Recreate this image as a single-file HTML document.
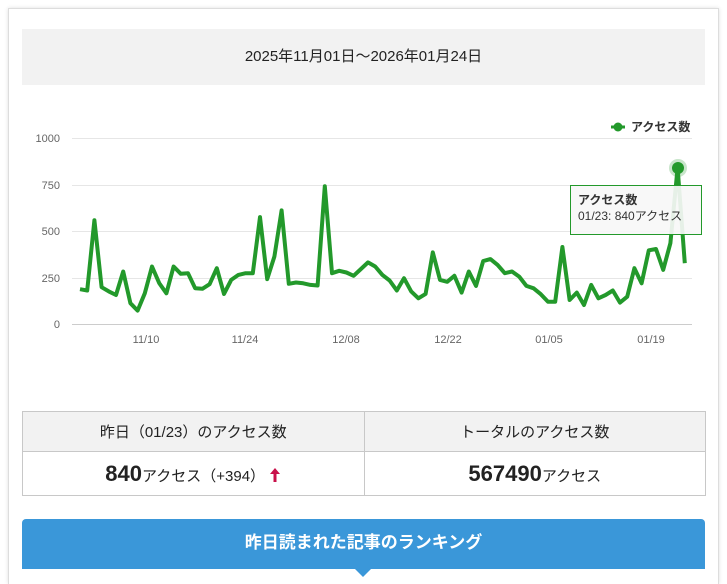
<!DOCTYPE html>
<html><head><meta charset="utf-8"><style>
html,body{margin:0;background:#fff;width:727px;height:577px;overflow:hidden;font-family:"Liberation Sans","Noto Sans CJK JP",sans-serif;color:#222}
.card{position:absolute;left:8px;top:8px;width:709px;height:575px;border:1px solid #ddd;border-bottom:none;box-shadow:0 0 4px rgba(0,0,0,.12);background:#fff}
.date{position:absolute;left:22px;top:29px;width:683px;height:56px;background:#f2f2f2;text-align:center;line-height:56px;font-size:15px}
table{position:absolute;left:22px;top:411px;width:684px;border-collapse:collapse;font-size:15px}
td{border:1px solid #c8c8c8;text-align:center;width:50%;padding:0}
tr.h td{background:#f2f2f2;height:39px}
tr.v td{height:43px;font-size:15px}
b{font-size:22px}
.btn{position:absolute;left:22px;top:519px;width:683px;height:50px;background:#3a97d9;border-radius:4px 4px 0 0;color:#fff;font-weight:bold;font-size:17px;text-align:center;line-height:48px}
.tri{position:absolute;left:355px;top:569px;border-left:8px solid transparent;border-right:8px solid transparent;border-top:8px solid #3a97d9}
svg{position:absolute;left:0;top:0}
</style></head><body>
<div class="card"></div>
<div class="date">2025年11月01日～2026年01月24日</div>
<svg width="727" height="400" font-family="Liberation Sans,Noto Sans CJK JP,sans-serif">
<g stroke="#e6e6e6" stroke-width="1">
<line x1="72" x2="692" y1="138.5" y2="138.5"/><line x1="72" x2="692" y1="185.5" y2="185.5"/><line x1="72" x2="692" y1="231.5" y2="231.5"/><line x1="72" x2="692" y1="278.5" y2="278.5"/><line x1="72" x2="692" y1="324.5" y2="324.5" stroke="#ccc"/>
</g>
<g font-size="11" fill="#666" text-anchor="end"><text x="60" y="142">1000</text><text x="60" y="189">750</text><text x="60" y="235">500</text><text x="60" y="282">250</text><text x="60" y="328">0</text></g>
<g font-size="11" fill="#666" text-anchor="middle"><text x="146" y="343">11/10</text><text x="245" y="343">11/24</text><text x="346" y="343">12/08</text><text x="448" y="343">12/22</text><text x="549" y="343">01/05</text><text x="651" y="343">01/19</text></g>
<polyline id="ln" fill="none" stroke="#23992b" stroke-width="4" stroke-linejoin="round" points=""/>
<circle cx="678" cy="168" r="9" fill="#23992b" opacity=".25"/>
<circle cx="678" cy="168" r="6" fill="#23992b"/>
<line x1="611" x2="625" y1="127" y2="127" stroke="#23992b" stroke-width="3"/><circle cx="618" cy="127" r="4.5" fill="#23992b"/>
<text x="631" y="131" font-size="12" font-weight="bold" fill="#333">アクセス数</text>
<rect x="570.5" y="185.5" width="131" height="49" fill="#f7f7f7" fill-opacity=".92" stroke="#23992b"/>
<text x="578" y="204" font-size="12" font-weight="bold" fill="#333">アクセス数</text>
<text x="578" y="220" font-size="12" fill="#333">01/23: 840アクセス</text>
</svg>
<script>
var v=[187,180,558,198,175,156,282,112,72,165,309,220,165,309,270,273,192,189,214,300,162,237,264,273,273,575,241,363,611,216,223,219,210,207,741,273,286,277,259,295,331,309,264,234,180,246,175,138,162,385,237,227,259,169,282,205,338,349,318,273,282,255,205,192,160,120,120,414,129,169,102,210,138,156,180,115,147,300,219,396,403,291,435,840,327];
var p=v.map(function(a,i){return (80+7.2*i).toFixed(1)+","+(324-a*0.186).toFixed(1)}).join(" ");
document.getElementById("ln").setAttribute("points",p);
</script>
<table><tr class="h"><td>昨日（01/23）のアクセス数</td><td>トータルのアクセス数</td></tr>
<tr class="v"><td><b>840</b>アクセス（+394） <svg style="position:static;vertical-align:-2px" width="12" height="16" viewBox="0 0 12 16"><path d="M6 1L1 7h3.5v8h3V7H11z" fill="#c8104a"/></svg></td><td><b>567490</b>アクセス</td></tr></table>
<div class="btn">昨日読まれた記事のランキング</div>
<div class="tri"></div>
</body></html>
